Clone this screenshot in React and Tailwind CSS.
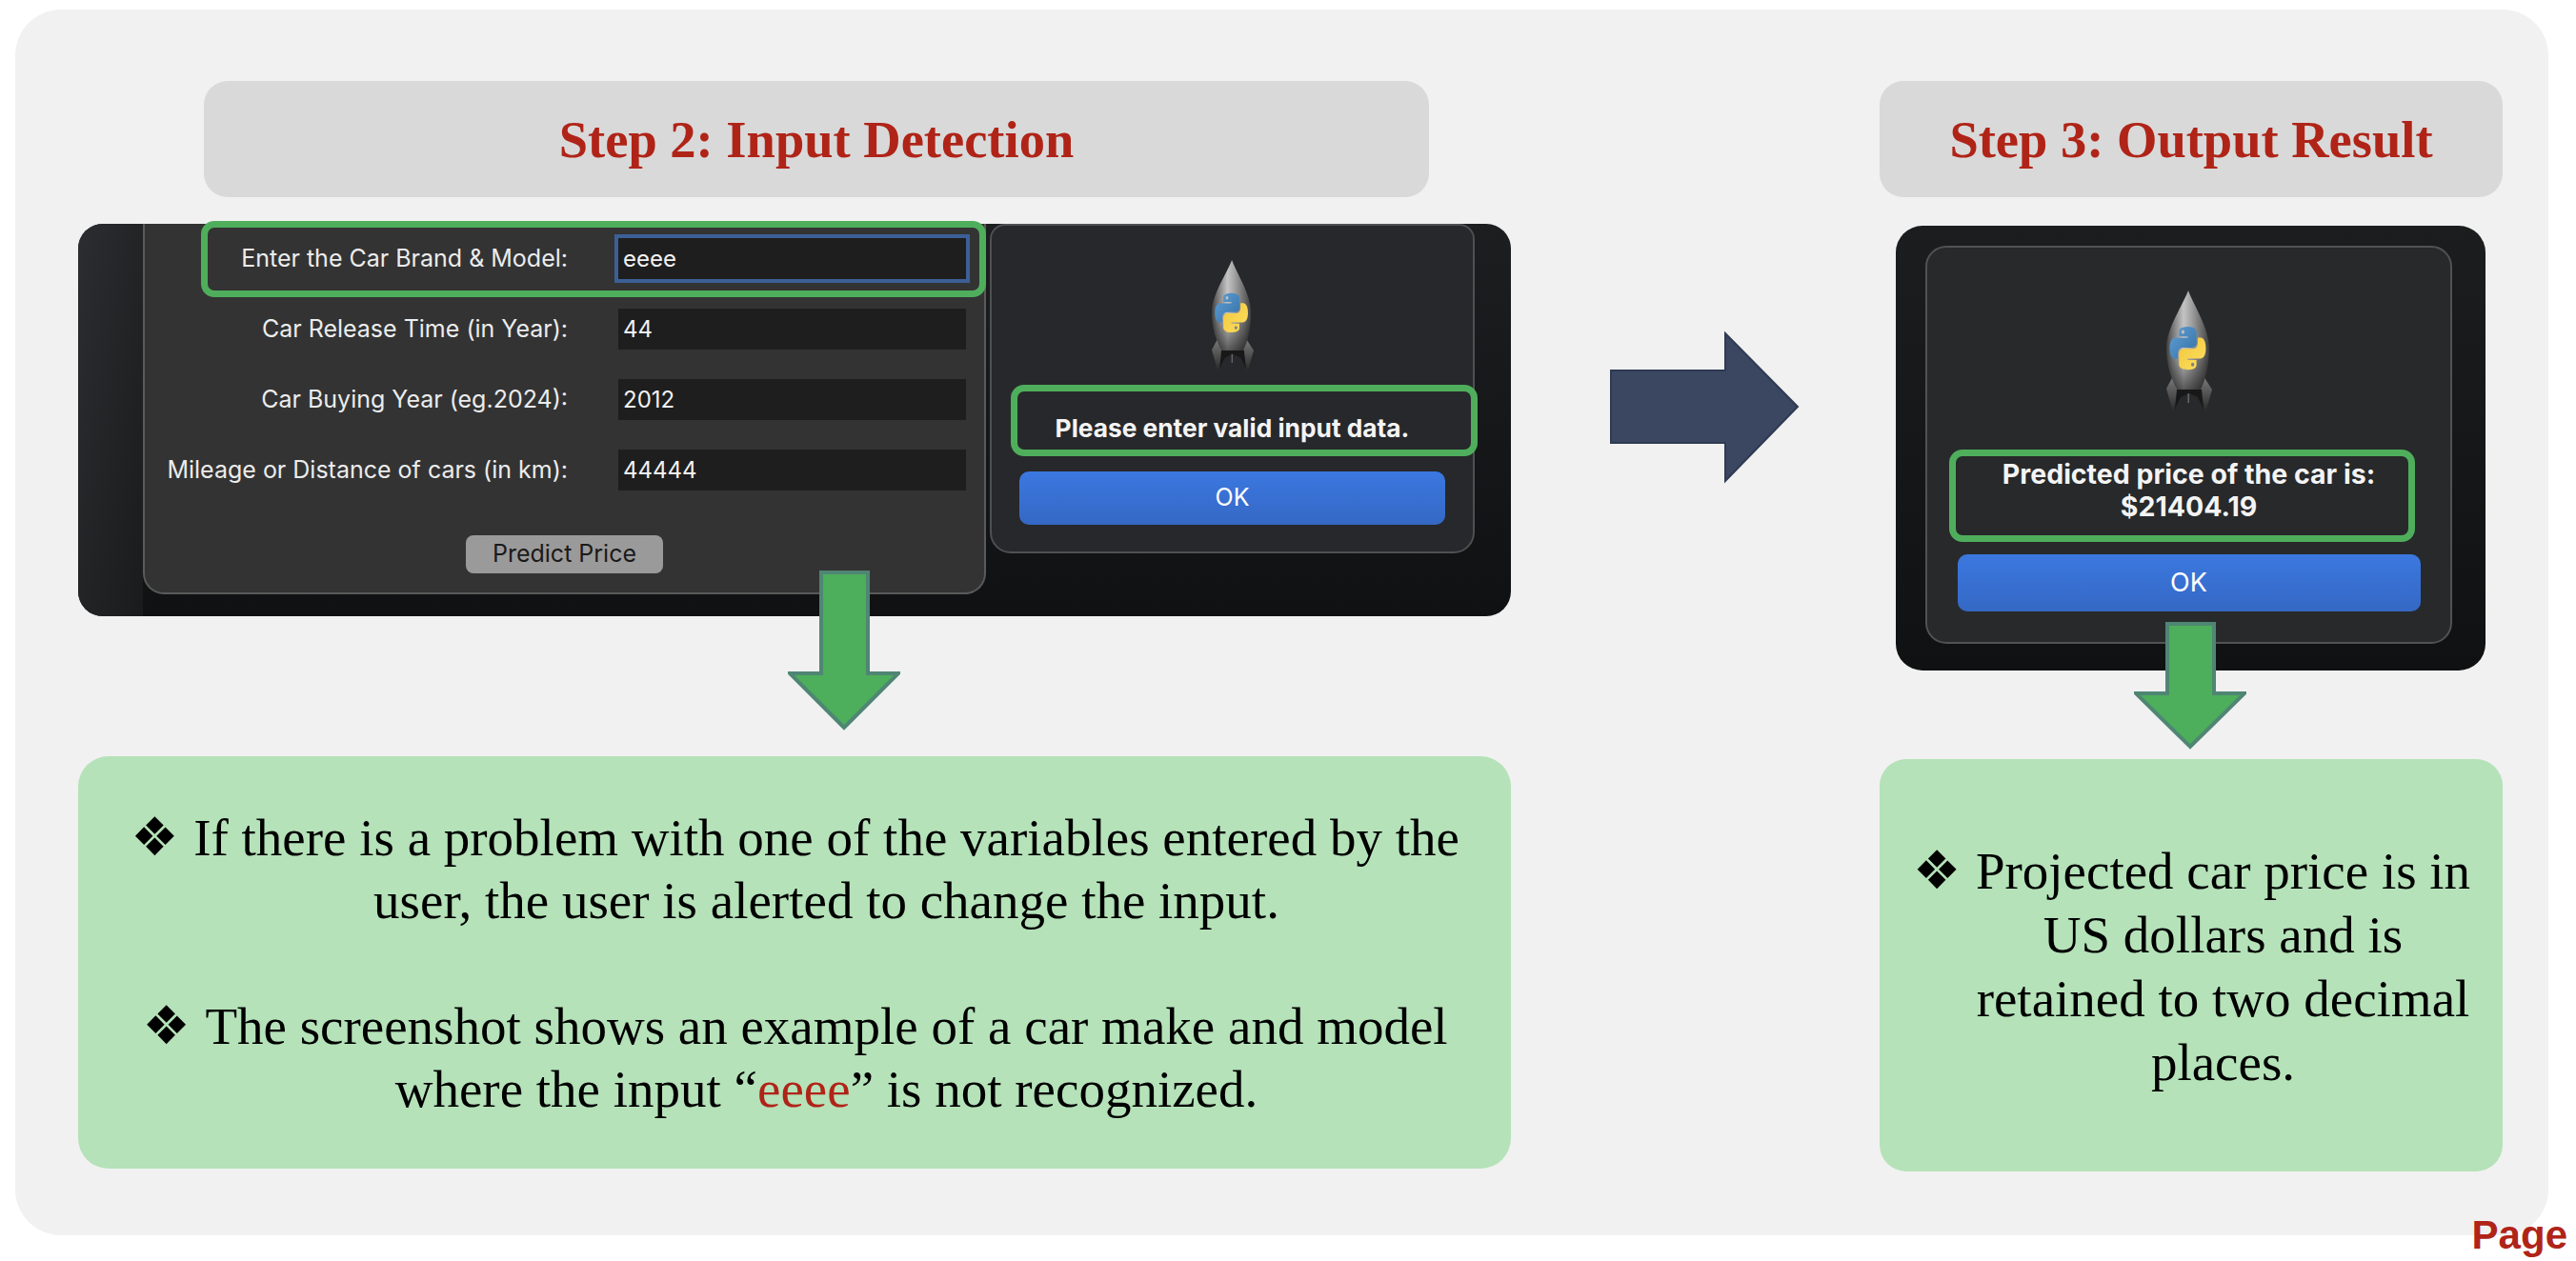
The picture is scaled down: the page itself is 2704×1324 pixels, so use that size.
import React from 'react';

const sans = 'font-["Inter","Liberation_Sans",sans-serif]';

// Python launcher rocket icon
function Rocket({ id, className }) {
  return (
    <svg viewBox="0 0 48 128" preserveAspectRatio="none" className={className}>
      <defs>
        <linearGradient id={id + 'body'} x1="0" x2="1" y1="0" y2="0">
          <stop offset="0" stopColor="#3f3f3f" />
          <stop offset="0.15" stopColor="#777777" />
          <stop offset="0.4" stopColor="#c4c4c4" />
          <stop offset="0.58" stopColor="#a2a2a2" />
          <stop offset="0.85" stopColor="#666666" />
          <stop offset="1" stopColor="#3c3c3c" />
        </linearGradient>
        <linearGradient id={id + 'shade'} x1="0" x2="0" y1="0" y2="1">
          <stop offset="0" stopColor="#000000" stopOpacity="0" />
          <stop offset="0.65" stopColor="#000000" stopOpacity="0" />
          <stop offset="1" stopColor="#000000" stopOpacity="0.55" />
        </linearGradient>
        <linearGradient id={id + 'fin'} x1="0" x2="0" y1="0" y2="1">
          <stop offset="0" stopColor="#7c7c7c" />
          <stop offset="1" stopColor="#262626" />
        </linearGradient>
        <linearGradient id={id + 'blue'} x1="0" x2="1" y1="0" y2="1">
          <stop offset="0" stopColor="#5f9fd6" />
          <stop offset="1" stopColor="#3570a5" />
        </linearGradient>
        <linearGradient id={id + 'yellow'} x1="0" x2="1" y1="0" y2="1">
          <stop offset="0" stopColor="#ffdf5e" />
          <stop offset="1" stopColor="#f0c73e" />
        </linearGradient>
      </defs>
      <path d="M7 90 L0 103 L7 128 L13 108 Z" fill={'url(#' + id + 'fin)'} />
      <path d="M39 90 L48 104 L41 128 L35 108 Z" fill={'url(#' + id + 'fin)'} />
      <path d="M11 104 L37 104 L39 124 L33 112 L24 108 L15 112 L9 124 Z" fill="#181818" />
      <path d="M23 0 C28 14 45 40 45 60 C45 78 41 94 36 104 L11 104 C5 92 0 78 0 60 C0 40 18 14 23 0 Z" fill={'url(#' + id + 'body)'} />
      <path d="M23 0 C28 14 45 40 45 60 C45 78 41 94 36 104 L11 104 C5 92 0 78 0 60 C0 40 18 14 23 0 Z" fill={'url(#' + id + 'shade)'} />
      <rect x="22.5" y="108" width="1.5" height="10" fill="#666666" />
      <g transform="translate(3.5 38) scale(0.345 0.41)">
        <path fill={'url(#' + id + 'blue)'} d="M54.9 0C26.8 0 28.6 12.2 28.6 12.2l0 12.6h26.8v3.8H17.9S0 26.6 0 55c0 28.4 15.6 27.4 15.6 27.4h9.3V69.2s-.5-15.6 15.4-15.6h26.5s14.9.2 14.9-14.4V15S84 0 54.9 0zM40.2 8.5c2.7 0 4.8 2.2 4.8 4.8 0 2.7-2.2 4.8-4.8 4.8-2.7 0-4.8-2.2-4.8-4.8 0-2.7 2.2-4.8 4.8-4.8z" />
        <path transform="rotate(180 55 55.2)" fill={'url(#' + id + 'yellow)'} d="M54.9 0C26.8 0 28.6 12.2 28.6 12.2l0 12.6h26.8v3.8H17.9S0 26.6 0 55c0 28.4 15.6 27.4 15.6 27.4h9.3V69.2s-.5-15.6 15.4-15.6h26.5s14.9.2 14.9-14.4V15S84 0 54.9 0zM40.2 8.5c2.7 0 4.8 2.2 4.8 4.8 0 2.7-2.2 4.8-4.8 4.8-2.7 0-4.8-2.2-4.8-4.8 0-2.7 2.2-4.8 4.8-4.8z" />
      </g>
    </svg>
  );
}

function Field({ label, value, focused }) {
  return (
    <div className="flex items-center h-[43px]">
      <div className="w-[444px] shrink-0 text-right text-[25px] whitespace-nowrap text-[#ececec]">{label}</div>
      <div className={'ml-[53px] w-[365px] h-[43px] bg-[#1e1e1e] flex items-center pl-[5px] text-[24px] text-[#f2f2f2] ' + (focused ? 'outline-[4px] outline-[#3c5f96]' : '')}>
        {value}
      </div>
    </div>
  );
}

function Bullet({ children }) {
  return (
    <p className="pl-[67px] -indent-[66px] text-center">
      <span className='inline-block w-[66px] indent-0 text-left text-[56px] leading-[1] font-["DejaVu_Sans",sans-serif]'>❖</span>
      {children}
    </p>
  );
}

function StepTitle({ children, className }) {
  return (
    <div className={'h-[122px] rounded-[25px] bg-[#d9d9d9] flex items-center justify-center font-bold text-[54.5px] text-[#b02418] ' + className}>
      <span className="translate-y-[1px]">{children}</span>
    </div>
  );
}

export default function App() {
  return (
    <div className='relative w-[2704px] h-[1324px] bg-white pt-[10px] pl-[16px] font-["Liberation_Serif","Times_New_Roman",serif]'>
      <div className="w-[2659px] h-[1287px] rounded-[48px] bg-[#f1f1f1] pt-[75px] pl-[66px] flex items-start">
        {/* Step 2 */}
        <div className="w-[1504px] shrink-0">
          <StepTitle className="ml-[132px] w-[1286px]">Step 2: Input Detection</StepTitle>
          <div className={'relative mt-[28px] h-[412px] rounded-[26px] bg-gradient-to-b from-[#1d1e20] to-[#101112] flex items-start pl-[68px] gap-[4px] ' + sans}>
            <div className="absolute left-0 top-0 w-[68px] h-full rounded-l-[26px] bg-gradient-to-br from-[#2b2d30] to-[#1a1b1c]" />
            <div className="relative w-[885px] h-[389px] rounded-b-[22px] bg-[#333333] border-x-2 border-b-2 border-[#5a5a5a] flex flex-col pt-[15px]">
              <div className="flex flex-col gap-[31px]">
                <Field label="Enter the Car Brand & Model:" value="eeee" focused />
                <Field label="Car Release Time (in Year):" value="44" />
                <Field label="Car Buying Year (eg.2024):" value="2012" />
                <Field label="Mileage or Distance of cars (in km):" value="44444" />
              </div>
              <div className="mt-[47px] mx-auto w-[207px] h-[40px] rounded-[8px] bg-[#9a9a9a] flex items-center justify-center text-[25px] text-[#1a1a1a]">Predict Price</div>
            </div>
            <div className="relative w-[509px] h-[346px] rounded-b-[22px] rounded-t-[16px] bg-[#27282b] border-2 border-[#4f5052] flex flex-col items-center pt-[36px]">
              <Rocket id="a" className="w-[44px] h-[117px]" />
              <div className="mt-[43px] h-[34px] leading-[34px] font-bold text-[26.3px] whitespace-nowrap text-[#f4f4f4]">Please enter valid input data.</div>
              <div className="mt-[28px] w-[447px] h-[56px] rounded-[10px] bg-gradient-to-b from-[#3b78e0] to-[#3568c4] flex items-center justify-center text-[25px] text-white">OK</div>
              <div className="absolute left-[20px] top-[167px] w-[490px] h-[75px] rounded-[14px] border-[7px] border-[#4fae5c]" />
            </div>
            <div className="absolute left-[129px] -top-[3px] w-[824px] h-[80px] rounded-[14px] border-[7px] border-[#4fae5c]" />
            <svg viewBox="0 0 118 168" className="absolute left-[745px] top-[364px] w-[118px] h-[168px]">
              <path d="M35 2 L84 2 L84 108 L116 108 L59 165 L2 108 L35 108 Z" fill="#4dae5b" stroke="#4f8673" strokeWidth="4" />
            </svg>
          </div>
          <div className="mt-[147px] h-[433px] rounded-[32px] bg-[#b5e2b9] flex flex-col justify-center pt-[3px] text-[55px] leading-[66px] text-black">
            <Bullet>If there is a problem with one of the variables entered by the<br />user, the user is alerted to change the input.</Bullet>
            <div className="h-[66px]" />
            <Bullet>The screenshot shows an example of a car make and model<br />where the input “<span className="text-[#b02418]">eeee</span>” is not recognized.</Bullet>
          </div>
        </div>

        <svg viewBox="0 0 200 160" className="ml-[103px] mt-[263px] w-[200px] h-[160px] shrink-0">
          <path d="M2 41 L122 41 L122 2 L198 79 L122 157 L122 117 L2 117 Z" fill="#3b4660" stroke="#2f3a53" strokeWidth="2" />
        </svg>

        {/* Step 3 */}
        <div className="ml-[84px] w-[654px] shrink-0">
          <StepTitle className="w-full">Step 3: Output Result</StepTitle>
          <div className={'relative mt-[30px] ml-[17px] w-[619px] h-[467px] rounded-[28px] bg-gradient-to-b from-[#1c1d1f] to-[#101112] pt-[21px] pl-[31px] ' + sans}>
            <div className="relative w-[553px] h-[418px] rounded-[22px] bg-[#27292b] border-2 border-[#505254] flex flex-col items-center pt-[45px]">
              <Rocket id="b" className="w-[48px] h-[128px]" />
              <div className="mt-[48px] text-center leading-[34px] font-bold text-[28.5px] whitespace-nowrap text-[#f4f4f4]">Predicted price of the car is:<br />$21404.19</div>
              <div className="mt-[33px] w-[486px] h-[60px] rounded-[10px] bg-gradient-to-b from-[#3b78e0] to-[#3568c4] flex items-center justify-center text-[27px] text-white">OK</div>
              <div className="absolute left-[23px] top-[212px] w-[489px] h-[97px] rounded-[14px] border-[7px] border-[#4fae5c]" />
            </div>
            <svg viewBox="0 0 118 134" className="absolute left-[250px] top-[416px] w-[118px] h-[134px]">
              <path d="M35 2 L84 2 L84 75 L116 75 L59 131 L2 75 L35 75 Z" fill="#4dae5b" stroke="#4f8673" strokeWidth="4" />
            </svg>
          </div>
          <div className="mt-[93px] h-[433px] rounded-[28px] bg-[#b5e2b9] flex flex-col justify-center pt-[3px] text-[55px] leading-[67px] text-black">
            <Bullet>Projected car price is in<br />US dollars and is<br />retained to two decimal<br />places.</Bullet>
          </div>
        </div>
      </div>
      <div className='absolute right-[9px] top-[1273px] font-bold text-[42px] leading-[48px] text-[#b02418] font-["Liberation_Sans",sans-serif]'>Page</div>
    </div>
  );
}
